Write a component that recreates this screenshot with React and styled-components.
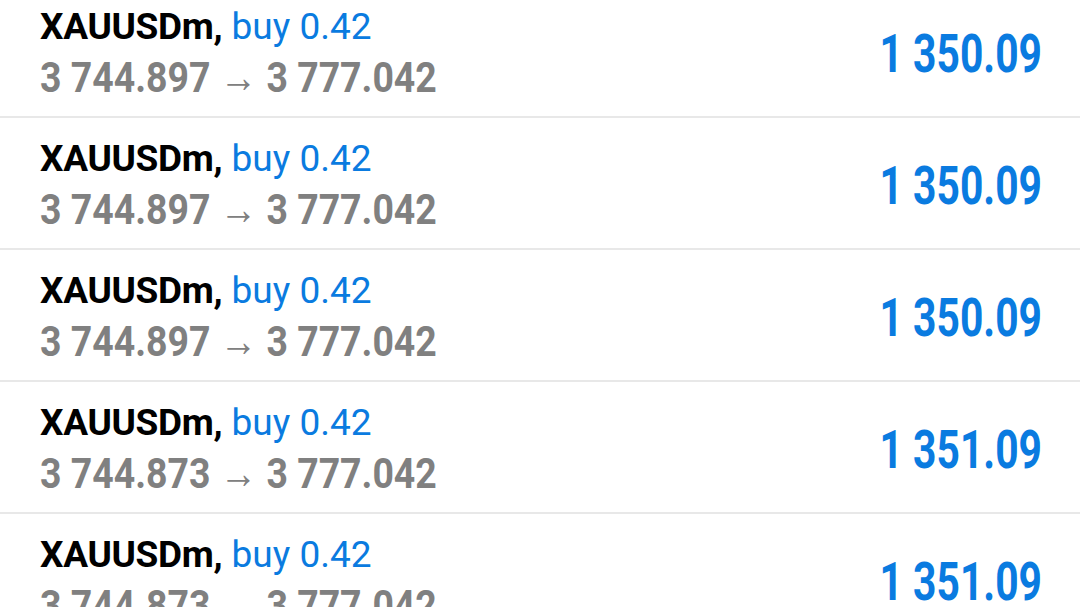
import React from "react";
import styled, { createGlobalStyle } from "styled-components";

const Global = createGlobalStyle`
  html, body { margin: 0; padding: 0; background: #ffffff; overflow: hidden; }
  body { font-family: Roboto, "Liberation Sans", sans-serif; }
`;

const List = styled.div`
  margin-top: -14px;
  display: flex;
  flex-direction: column;
`;

const Row = styled.div`
  height: 132px;
  box-sizing: border-box;
  border-bottom: 2px solid #e8e8e8;
  display: flex;
  justify-content: space-between;
  align-items: flex-start;
  padding: 0 38px 0 40px;
`;

const Left = styled.div`
  display: flex;
  flex-direction: column;
  padding-top: 17px;
`;

const Title = styled.div`
  font-size: 37px;
  line-height: 47px;
  white-space: nowrap;
`;

const Symbol = styled.span`
  font-weight: 700;
  color: #000;
  letter-spacing: -0.3px;
`;

const Side = styled.span`
  font-weight: 400;
  color: #0a7be0;
`;

const Prices = styled.div`
  font-size: 43px;
  line-height: 54px;
  font-weight: 700;
  color: #808080;
  white-space: nowrap;
  transform: scaleX(${(p) => p.$sx});
  transform-origin: left center;
`;

const Profit = styled.div`
  padding-top: 38px;
  font-size: 53px;
  line-height: 60px;
  font-weight: 700;
  color: #0a7be0;
  white-space: nowrap;
  transform: scaleX(${(p) => p.$sx});
  transform-origin: right center;
`;

const rows = [
  { open: "3 744.897", close: "3 777.042", profit: "1 350.09" },
  { open: "3 744.897", close: "3 777.042", profit: "1 350.09" },
  { open: "3 744.897", close: "3 777.042", profit: "1 350.09" },
  { open: "3 744.873", close: "3 777.042", profit: "1 351.09" },
  { open: "3 744.873", close: "3 777.042", profit: "1 351.09" },
];

export default function App() {
  return (
    <>
      <Global />
      <List>
        {rows.map((r, i) => (
          <Row key={i}>
            <Left>
              <Title>
                <Symbol>XAUUSDm,</Symbol> <Side>buy 0.42</Side>
              </Title>
              <Prices $sx={0.87}>
                {r.open} → {r.close}
              </Prices>
            </Left>
            <Profit $sx={0.77}>{r.profit}</Profit>
          </Row>
        ))}
      </List>
    </>
  );
}
